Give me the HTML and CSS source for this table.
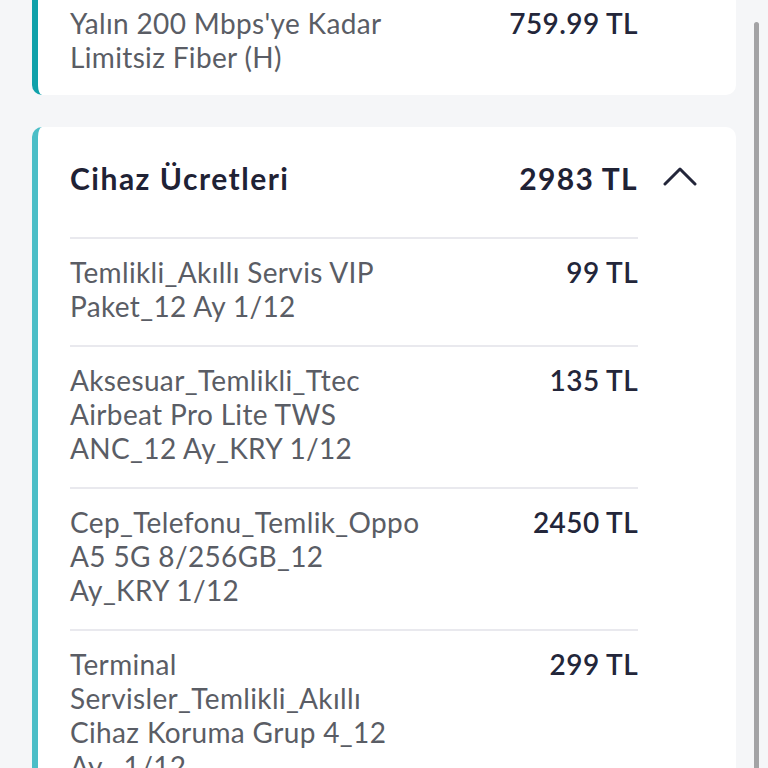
FILE: index.html
```html
<!DOCTYPE html>
<html lang="tr">
<head>
<meta charset="utf-8">
<title>Cihaz Ücretleri</title>
<link rel="stylesheet" href="styles.css">
</head>
<body>
<div class="page">
  <section class="card card-dark card-cut">
    <div class="row row-plain">
      <div class="name">Yalın 200 Mbps'ye Kadar Limitsiz Fiber (H)</div>
      <div class="price">759.99 TL</div>
    </div>
  </section>

  <section class="card card-light">
    <div class="head">
      <div class="head-title">Cihaz Ücretleri</div>
      <div class="head-price">2983 TL</div>
      <svg class="chevron" width="34" height="20" viewBox="0 0 34 20" aria-hidden="true">
        <path d="M2 18 L17 3 L32 18" fill="none" stroke="#23263a" stroke-width="3" stroke-linecap="round" stroke-linejoin="round"/>
      </svg>
    </div>
    <div class="list">
      <div class="row">
        <div class="name">Temlikli_Akıllı Servis VIP Paket_12 Ay 1/12</div>
        <div class="price">99 TL</div>
      </div>
      <div class="row">
        <div class="name">Aksesuar_Temlikli_Ttec Airbeat Pro Lite TWS ANC_12 Ay_KRY 1/12</div>
        <div class="price">135 TL</div>
      </div>
      <div class="row">
        <div class="name">Cep_Telefonu_Temlik_Oppo A5 5G 8/256GB_12 Ay_KRY 1/12</div>
        <div class="price">2450 TL</div>
      </div>
      <div class="row">
        <div class="name">Terminal Servisler_Temlikli_Akıllı Cihaz Koruma Grup 4_12 Ay_ 1/12</div>
        <div class="price">299 TL</div>
      </div>
    </div>
  </section>
</div>
<div class="scrollbar"></div>
</body>
</html>
```

FILE: styles.css
```css
html, body {
  margin: 0;
  padding: 0;
  height: 100%;
  overflow: hidden;
  background: #f5f6f8;
  font-family: "Lato", "Open Sans", sans-serif;
}

.page {
  padding-left: 32px;
  width: 704px;
  display: flex;
  flex-direction: column;
  gap: 32px;
}

.card {
  background: #ffffff;
  border-left: 6px solid #4bbec7;
  border-radius: 10px;
  padding: 34px 98px 0 32px;
}

.card-dark {
  border-left-color: #0fa1aa;
}

.card-cut {
  margin-top: -30px;
  padding-top: 36px;
  padding-bottom: 21px;
}

.head {
  display: flex;
  align-items: center;
  position: relative;
  height: 34px;
  margin-bottom: 42px;
}

.head-title {
  flex: 1;
  font-size: 30px;
  font-weight: 700;
  letter-spacing: 1.5px;
  color: #1f2235;
}

.head-price {
  font-size: 30px;
  font-weight: 700;
  letter-spacing: 1.3px;
  color: #1f2235;
}

.chevron {
  position: absolute;
  right: -59px;
  top: 5px;
}

.row {
  display: flex;
  justify-content: space-between;
  gap: 30px;
  border-top: 2px solid #e9e9ee;
  padding: 16px 0 22px;
}

.row-plain {
  border-top: none;
  padding: 0;
}

.name {
  width: 332px;
  font-size: 28px;
  line-height: 34px;
  letter-spacing: 0.35px;
  color: #5a5d65;
}

.price {
  font-size: 28px;
  line-height: 34px;
  font-weight: 600;
  letter-spacing: 0.4px;
  color: #23263a;
  white-space: nowrap;
}

.scrollbar {
  position: absolute;
  left: 754px;
  top: 22px;
  width: 5px;
  height: 760px;
  background: #a3a3a5;
  border-radius: 3px;
}
```
